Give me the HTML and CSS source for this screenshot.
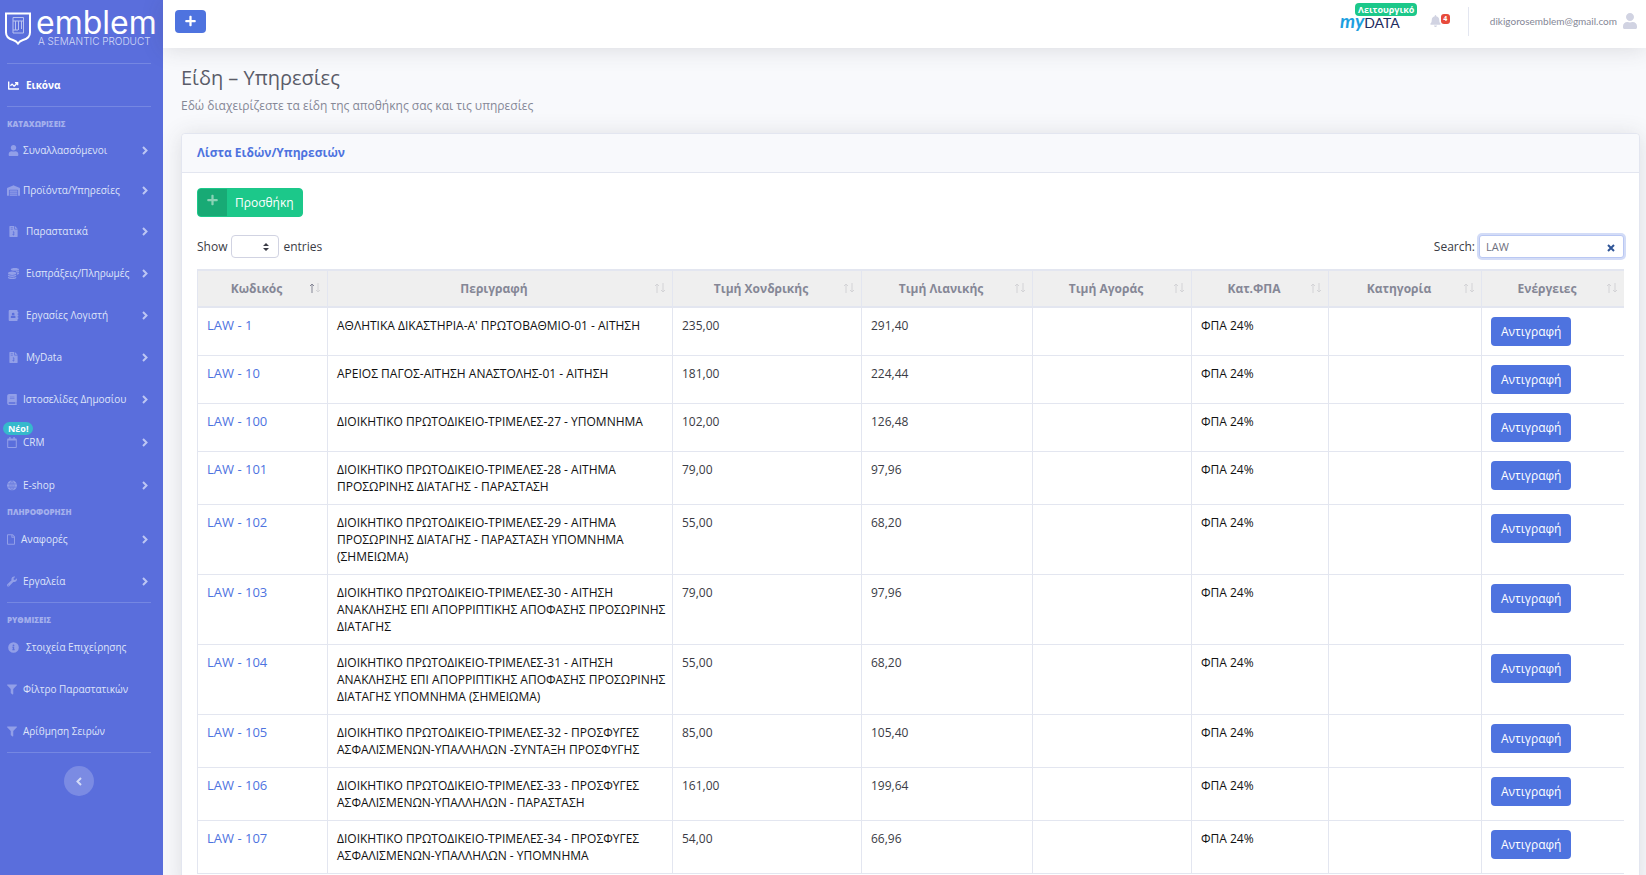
FILE: index.html
```html
<!DOCTYPE html>
<html lang="el">
<head>
	<meta charset="UTF-8">
	<meta name="viewport" content="width=device-width, initial-scale=1">
	<title>Είδη – Υπηρεσίες</title>
	<link rel="stylesheet" href="styles.css">
</head>
<body>
	<!-- icon set -->
	<svg class="sprite" aria-hidden="true">
		<symbol id="i-plus" viewBox="0 0 448 512"><path d="M416 208H272V64c0-17.67-14.33-32-32-32h-32c-17.67 0-32 14.33-32 32v144H32c-17.67 0-32 14.33-32 32v32c0 17.67 14.33 32 32 32h144v144c0 17.67 14.33 32 32 32h32c17.67 0 32-14.33 32-32V304h144c17.67 0 32-14.33 32-32v-32c0-17.67-14.33-32-32-32z"/></symbol>
		<symbol id="i-user" viewBox="0 0 448 512"><path d="M224 256c70.7 0 128-57.3 128-128S294.7 0 224 0 96 57.3 96 128s57.3 128 128 128zm89.6 32h-16.7c-22.2 10.2-46.9 16-72.9 16s-50.6-5.8-72.9-16h-16.7C60.2 288 0 348.2 0 422.4V464c0 26.5 21.5 48 48 48h352c26.5 0 48-21.5 48-48v-41.6c0-74.2-60.2-134.4-134.4-134.4z"/></symbol>
		<symbol id="i-bell" viewBox="0 0 448 512"><path d="M224 512c35.32 0 63.97-28.65 63.97-64H160.03c0 35.35 28.65 64 63.97 64zm215.39-149.71c-19.32-20.76-55.47-51.99-55.47-154.29 0-77.7-54.48-139.9-127.94-155.16V32c0-17.67-14.32-32-31.98-32s-31.98 14.33-31.98 32v20.84C118.56 68.1 64.08 130.3 64.08 208c0 102.3-36.15 133.53-55.47 154.29-6 6.45-8.66 14.16-8.61 21.71.11 16.4 12.98 32 32.1 32h383.8c19.12 0 32-15.6 32.1-32 .05-7.55-2.61-15.27-8.61-21.71z"/></symbol>
		<symbol id="i-chart" viewBox="0 0 512 512"><path d="M496 384H64V80c0-8.84-7.16-16-16-16H16C7.16 64 0 71.16 0 80v336c0 17.67 14.33 32 32 32h464c8.84 0 16-7.16 16-16v-32c0-8.84-7.16-16-16-16zM464 96H345.94c-21.38 0-32.09 25.85-16.97 40.97l32.4 32.4L288 242.75l-73.37-73.37c-12.5-12.5-32.76-12.5-45.25 0l-68.69 68.69c-6.25 6.25-6.25 16.38 0 22.63l22.62 22.62c6.25 6.25 16.38 6.25 22.63 0L192 237.25l73.37 73.37c12.5 12.5 32.76 12.5 45.25 0l96-96 32.4 32.4c15.12 15.12 40.97 4.41 40.97-16.97V112c.01-8.84-7.15-16-15.99-16z"/></symbol>
		<symbol id="i-warehouse" viewBox="0 0 640 512"><path d="M504 352H136c-4 0-8 4-8 8v48c0 4 4 8 8 8h368c4 0 8-4 8-8v-48c0-4-4-8-8-8zm0 96H136c-4 0-8 4-8 8v48c0 4 4 8 8 8h368c4 0 8-4 8-8v-48c0-4-4-8-8-8zm0-192H136c-4 0-8 4-8 8v48c0 4 4 8 8 8h368c4 0 8-4 8-8v-48c0-4-4-8-8-8zm106-139L338 4c-12-5-25-5-37 0L30 117C12 125 0 142 0 161v343c0 4 4 8 8 8h80c4 0 8-4 8-8V256c0-18 15-32 33-32h382c18 0 33 14 33 32v248c0 4 4 8 8 8h80c4 0 8-4 8-8V161c0-19-12-36-30-44z"/></symbol>
		<symbol id="i-invoice" viewBox="0 0 384 512"><path fill-rule="evenodd" d="M24 0h200v136c0 13 11 24 24 24h136v328c0 13-11 24-24 24H24c-13 0-24-11-24-24V24C0 11 11 0 24 0zm232 0l128 128H256zM64 64v32h96V64zm0 64v32h96v-32zm100 112v48h56v-24h-24v-24zm28 64c-40 0-40 56 0 62 20 4 18 18 0 18h-46v32h30v24h32v-26c44-8 44-68-8-76-16-3-14-14 0-14h40v-20z"/></symbol>
		<symbol id="i-coins" viewBox="0 0 512 512"><path d="M0 405v43c0 35 86 64 192 64s192-29 192-64v-43c-41 29-117 43-192 43S41 434 0 405zM320 128c106 0 192-29 192-64S426 0 320 0 128 29 128 64s86 64 192 64zM0 300v52c0 35 86 64 192 64s192-29 192-64v-52c-41 34-117 52-192 52S41 334 0 300zm416 11c57-11 96-32 96-55v-43c-23 17-57 28-96 35zM192 160C86 160 0 196 0 240s86 80 192 80 192-36 192-80-86-80-192-80zm219 56c60-11 101-32 101-56v-43c-36 25-99 39-165 42 30 15 54 34 64 57z"/></symbol>
		<symbol id="i-address" viewBox="0 0 448 512"><path fill-rule="evenodd" d="M48 0h320c26 0 48 22 48 48v48h20c7 0 12 5 12 12v40c0 7-5 12-12 12h-20v64h20c7 0 12 5 12 12v40c0 7-5 12-12 12h-20v64h20c7 0 12 5 12 12v40c0 7-5 12-12 12h-20v48c0 26-22 48-48 48H48c-26 0-48-22-48-48V48C0 22 22 0 48 0zm160 128a64 64 0 1 0 0 128 64 64 0 0 0 0-128zm-45 144c-37 0-67 26-67 58v20c0 10 10 18 22 18h180c12 0 22-8 22-18v-20c0-32-30-58-67-58-28 16-62 16-90 0z"/></symbol>
		<symbol id="i-book" viewBox="0 0 448 512"><path fill-rule="evenodd" d="M448 360V24c0-13-11-24-24-24H96C43 0 0 43 0 96v320c0 53 43 96 96 96h328c13 0 24-11 24-24v-16c0-8-4-14-9-19-4-15-4-59 0-74 5-4 9-11 9-19zM128 128h210v28H128zm0 64h210v28H128zm253 256H96c-42 0-42-64 0-64h285c-2 17-2 47 0 64z"/></symbol>
		<symbol id="i-calendar" viewBox="0 0 448 512"><path fill-rule="evenodd" d="M400 64h-48V12c0-7-5-12-12-12h-40c-7 0-12 5-12 12v52H160V12c0-7-5-12-12-12h-40c-7 0-12 5-12 12v52H48c-26 0-48 22-48 48v352c0 26 22 48 48 48h352c26 0 48-22 48-48V112c0-26-22-48-48-48zm0 394c0 3-3 6-6 6H54c-3 0-6-3-6-6V160h352z"/></symbol>
		<symbol id="i-globe" viewBox="0 0 496 512"><circle cx="248" cy="256" r="248"/><path class="globe-lines" d="M0 176h496M0 336h496M248 0v512M248 8c-140 130-140 366 0 496M248 8c140 130 140 366 0 496"/></symbol>
		<symbol id="i-file" viewBox="0 0 384 512"><path d="M369.9 97.9L286 14C277 5 264.8-.1 252.1-.1H48C21.5 0 0 21.5 0 48v416c0 26.5 21.5 48 48 48h288c26.5 0 48-21.5 48-48V131.9c0-12.7-5.1-25-14.1-34zM332.1 128H256V51.9l76.1 76.1zM48 464V48h160v104c0 13.3 10.7 24 24 24h104v288H48z"/></symbol>
		<symbol id="i-wrench" viewBox="0 0 512 512"><path d="M507.73 109.1c-2.24-9.03-13.54-12.09-20.12-5.51l-74.36 74.36-67.88-11.31-11.31-67.88 74.36-74.36c6.62-6.62 3.43-17.9-5.66-20.16-47.38-11.74-99.55.91-136.58 37.93-39.64 39.64-50.55 97.1-34.05 147.2L18.74 402.76c-24.99 24.99-24.99 65.51 0 90.5 24.99 24.99 65.51 24.99 90.5 0l213.21-213.21c50.12 16.71 107.47 5.68 147.37-34.22 37.07-37.07 49.7-89.32 37.91-136.73zM64 472c-13.25 0-24-10.75-24-24 0-13.26 10.75-24 24-24s24 10.74 24 24c0 13.25-10.75 24-24 24z"/></symbol>
		<symbol id="i-info" viewBox="0 0 512 512"><path fill-rule="evenodd" d="M256 8a248 248 0 1 0 0 496 248 248 0 0 0 0-496zm0 110a42 42 0 1 1 0 84 42 42 0 0 1 0-84zm56 254c0 7-5 12-12 12h-88c-7 0-12-5-12-12v-24c0-7 5-12 12-12h12v-64h-12c-7 0-12-5-12-12v-24c0-7 5-12 12-12h64c7 0 12 5 12 12v100h12c7 0 12 5 12 12z"/></symbol>
		<symbol id="i-filter" viewBox="0 0 512 512"><path d="M487.976 0H24.028C2.71 0-8.047 25.866 7.058 40.971L192 225.941V432c0 7.831 3.821 15.17 10.237 19.662l80 55.98C298.02 518.69 320 507.493 320 487.98V225.941l184.947-184.97C520.021 25.896 509.338 0 487.976 0z"/></symbol>
		<symbol id="i-angle" viewBox="0 0 6 9"><path class="line-bold" d="M1 1l3.500 3.500L1 8"/></symbol>
		<symbol id="i-sort" viewBox="0 0 12 10"><path class="line sort-up" d="M3 10V1M1 3l2-2 2 2"/><path class="line" d="M9 0v9M7 7l2 2 2-2"/></symbol>
	</svg>

	<div class="layout">
		<nav class="sidebar">
			<a class="brand" href="#">
				<svg class="brand-shield" viewBox="0 0 26 33" aria-hidden="true">
					<path class="shield-line" d="M1 1.500h24v19c0 4-3 6.500-7 7.500-2.500.700-4 2-5 3.500-1-1.500-2.500-2.800-5-3.500-4-1-7-3.500-7-7.500z"/>
					<path class="shield-mark" d="M8 5.500h10.500v15.500H8zM8 9h10.500M10.500 9v9M13.500 9v9M16.500 9v8M8 18h5"/>
				</svg>
				<span class="brand-text">
					<span class="brand-name">emblem</span>
					<span class="brand-tag">A SEMANTIC PRODUCT</span>
				</span>
			</a>
			<hr class="divider">
			<a class="nav-link active" href="#"><svg class="icon fw"><use href="#i-chart"/></svg>Εικόνα</a>
			<hr class="divider">

			<div class="nav-heading">ΚΑΤΑΧΩΡΙΣΕΙΣ</div>
			<a class="nav-link compact" href="#"><svg class="icon fw"><use href="#i-user"/></svg>Συναλλασσόμενοι<svg class="angle"><use href="#i-angle"/></svg></a>
			<a class="nav-link compact" href="#"><svg class="icon fw"><use href="#i-warehouse"/></svg>Προϊόντα/Υπηρεσίες<svg class="angle"><use href="#i-angle"/></svg></a>
			<a class="nav-link" href="#"><svg class="icon fw"><use href="#i-invoice"/></svg>Παραστατικά<svg class="angle"><use href="#i-angle"/></svg></a>
			<a class="nav-link" href="#"><svg class="icon fw"><use href="#i-coins"/></svg>Εισπράξεις/Πληρωμές<svg class="angle"><use href="#i-angle"/></svg></a>
			<a class="nav-link" href="#"><svg class="icon fw"><use href="#i-address"/></svg>Εργασίες Λογιστή<svg class="angle"><use href="#i-angle"/></svg></a>
			<a class="nav-link" href="#"><svg class="icon fw"><use href="#i-invoice"/></svg>MyData<svg class="angle"><use href="#i-angle"/></svg></a>
			<a class="nav-link" href="#"><svg class="icon"><use href="#i-book"/></svg>Ιστοσελίδες Δημοσίου<svg class="angle"><use href="#i-angle"/></svg></a>
			<a class="nav-link has-badge" href="#"><span class="badge-new">Νέο!</span><svg class="icon"><use href="#i-calendar"/></svg>CRM<svg class="angle"><use href="#i-angle"/></svg></a>
			<a class="nav-link" href="#"><svg class="icon"><use href="#i-globe"/></svg>E-shop<svg class="angle"><use href="#i-angle"/></svg></a>

			<div class="nav-heading">ΠΛΗΡΟΦΟΡΗΣΗ</div>
			<a class="nav-link" href="#"><svg class="icon narrow"><use href="#i-file"/></svg>Αναφορές<svg class="angle"><use href="#i-angle"/></svg></a>
			<a class="nav-link" href="#"><svg class="icon"><use href="#i-wrench"/></svg>Εργαλεία<svg class="angle"><use href="#i-angle"/></svg></a>
			<hr class="divider">

			<div class="nav-heading">ΡΥΘΜΙΣΕΙΣ</div>
			<a class="nav-link" href="#"><svg class="icon fw"><use href="#i-info"/></svg>Στοιχεία Επιχείρησης</a>
			<a class="nav-link" href="#"><svg class="icon"><use href="#i-filter"/></svg>Φίλτρο Παραστατικών</a>
			<a class="nav-link" href="#"><svg class="icon"><use href="#i-filter"/></svg>Αρίθμηση Σειρών</a>
			<hr class="divider">
			<button class="collapse" type="button" aria-label="Σύμπτυξη μενού"><svg class="angle back"><use href="#i-angle"/></svg></button>
		</nav>

		<div class="main">
			<header class="topbar">
				<button class="btn-new" type="button" aria-label="Νέο"><svg><use href="#i-plus"/></svg></button>
				<a class="mydata" href="#"><span class="mydata-my">my</span><span class="mydata-data">DATA</span><span class="mydata-status">Λειτουργικό</span></a>
				<a class="alerts" href="#" aria-label="Ειδοποιήσεις"><svg><use href="#i-bell"/></svg><span class="alerts-count">4</span></a>
				<a class="account" href="#">dikigorosemblem@gmail.com<svg><use href="#i-user"/></svg></a>
			</header>

			<main class="content">
				<h1>Είδη – Υπηρεσίες</h1>
				<p class="lead">Εδώ διαχειρίζεστε τα είδη της αποθήκης σας και τις υπηρεσίες</p>

				<section class="card">
					<h2 class="card-header">Λίστα Ειδών/Υπηρεσιών</h2>
					<div class="card-body">
						<button class="btn-add" type="button"><span class="btn-add-icon"><svg><use href="#i-plus"/></svg></span><span class="btn-add-text">Προσθήκη</span></button>

						<div class="table-tools">
							<label class="length">Show
								<span class="select-wrap">
									<select><option></option><option>10</option><option>25</option></select>
									<svg viewBox="0 0 6 8"><path d="M0 3l3-3 3 3zM0 5h6L3 8z"/></svg>
								</span>
								entries</label>
							<div class="filter">
								<label for="search">Search:</label>
								<span class="search-wrap">
									<input id="search" type="text" value="LAW" autofocus>
									<button class="clear" type="button" aria-label="Clear"><svg viewBox="0 0 8 8"><path d="M1 1l6 6M7 1L1 7"/></svg></button>
								</span>
							</div>
						</div>

						<table>
							<colgroup>
								<col class="c-code"><col class="c-desc"><col class="c-whole"><col class="c-retail"><col class="c-buy"><col class="c-vat"><col class="c-cat"><col class="c-act">
							</colgroup>
							<thead>
								<tr>
									<th class="sorted">Κωδικός<svg class="sort"><use href="#i-sort"/></svg></th>
									<th>Περιγραφή<svg class="sort"><use href="#i-sort"/></svg></th>
									<th>Τιμή Χονδρικής<svg class="sort"><use href="#i-sort"/></svg></th>
									<th>Τιμή Λιανικής<svg class="sort"><use href="#i-sort"/></svg></th>
									<th>Τιμή Αγοράς<svg class="sort"><use href="#i-sort"/></svg></th>
									<th>Κατ.ΦΠΑ<svg class="sort"><use href="#i-sort"/></svg></th>
									<th>Κατηγορία<svg class="sort"><use href="#i-sort"/></svg></th>
									<th>Ενέργειες<svg class="sort"><use href="#i-sort"/></svg></th>
								</tr>
							</thead>
							<tbody>
								<tr>
									<td class="code"><a href="#">LAW - 1</a></td>
									<td class="desc">ΑΘΛΗΤΙΚΑ ΔΙΚΑΣΤΗΡΙΑ-Α' ΠΡΩΤΟΒΑΘΜΙΟ-01 - ΑΙΤΗΣΗ</td>
									<td>235,00</td><td>291,40</td><td></td><td class="vat">ΦΠΑ 24%</td><td></td>
									<td><button class="btn-copy" type="button">Αντιγραφή</button></td>
								</tr>
								<tr>
									<td class="code"><a href="#">LAW - 10</a></td>
									<td class="desc">ΑΡΕΙΟΣ ΠΑΓΟΣ-ΑΙΤΗΣΗ ΑΝΑΣΤΟΛΗΣ-01 - ΑΙΤΗΣΗ</td>
									<td>181,00</td><td>224,44</td><td></td><td class="vat">ΦΠΑ 24%</td><td></td>
									<td><button class="btn-copy" type="button">Αντιγραφή</button></td>
								</tr>
								<tr>
									<td class="code"><a href="#">LAW - 100</a></td>
									<td class="desc">ΔΙΟΙΚΗΤΙΚΟ ΠΡΩΤΟΔΙΚΕΙΟ-ΤΡΙΜΕΛΕΣ-27 - ΥΠΟΜΝΗΜΑ</td>
									<td>102,00</td><td>126,48</td><td></td><td class="vat">ΦΠΑ 24%</td><td></td>
									<td><button class="btn-copy" type="button">Αντιγραφή</button></td>
								</tr>
								<tr>
									<td class="code"><a href="#">LAW - 101</a></td>
									<td class="desc">ΔΙΟΙΚΗΤΙΚΟ ΠΡΩΤΟΔΙΚΕΙΟ-ΤΡΙΜΕΛΕΣ-28 - ΑΙΤΗΜΑ ΠΡΟΣΩΡΙΝΗΣ ΔΙΑΤΑΓΗΣ - ΠΑΡΑΣΤΑΣΗ</td>
									<td>79,00</td><td>97,96</td><td></td><td class="vat">ΦΠΑ 24%</td><td></td>
									<td><button class="btn-copy" type="button">Αντιγραφή</button></td>
								</tr>
								<tr>
									<td class="code"><a href="#">LAW - 102</a></td>
									<td class="desc">ΔΙΟΙΚΗΤΙΚΟ ΠΡΩΤΟΔΙΚΕΙΟ-ΤΡΙΜΕΛΕΣ-29 - ΑΙΤΗΜΑ ΠΡΟΣΩΡΙΝΗΣ ΔΙΑΤΑΓΗΣ - ΠΑΡΑΣΤΑΣΗ ΥΠΟΜΝΗΜΑ (ΣΗΜΕΙΩΜΑ)</td>
									<td>55,00</td><td>68,20</td><td></td><td class="vat">ΦΠΑ 24%</td><td></td>
									<td><button class="btn-copy" type="button">Αντιγραφή</button></td>
								</tr>
								<tr>
									<td class="code"><a href="#">LAW - 103</a></td>
									<td class="desc">ΔΙΟΙΚΗΤΙΚΟ ΠΡΩΤΟΔΙΚΕΙΟ-ΤΡΙΜΕΛΕΣ-30 - ΑΙΤΗΣΗ ΑΝΑΚΛΗΣΗΣ ΕΠΙ ΑΠΟΡΡΙΠΤΙΚΗΣ ΑΠΟΦΑΣΗΣ ΠΡΟΣΩΡΙΝΗΣ ΔΙΑΤΑΓΗΣ</td>
									<td>79,00</td><td>97,96</td><td></td><td class="vat">ΦΠΑ 24%</td><td></td>
									<td><button class="btn-copy" type="button">Αντιγραφή</button></td>
								</tr>
								<tr>
									<td class="code"><a href="#">LAW - 104</a></td>
									<td class="desc">ΔΙΟΙΚΗΤΙΚΟ ΠΡΩΤΟΔΙΚΕΙΟ-ΤΡΙΜΕΛΕΣ-31 - ΑΙΤΗΣΗ ΑΝΑΚΛΗΣΗΣ ΕΠΙ ΑΠΟΡΡΙΠΤΙΚΗΣ ΑΠΟΦΑΣΗΣ ΠΡΟΣΩΡΙΝΗΣ ΔΙΑΤΑΓΗΣ ΥΠΟΜΝΗΜΑ (ΣΗΜΕΙΩΜΑ)</td>
									<td>55,00</td><td>68,20</td><td></td><td class="vat">ΦΠΑ 24%</td><td></td>
									<td><button class="btn-copy" type="button">Αντιγραφή</button></td>
								</tr>
								<tr>
									<td class="code"><a href="#">LAW - 105</a></td>
									<td class="desc">ΔΙΟΙΚΗΤΙΚΟ ΠΡΩΤΟΔΙΚΕΙΟ-ΤΡΙΜΕΛΕΣ-32 - ΠΡΟΣΦΥΓΕΣ ΑΣΦΑΛΙΣΜΕΝΩΝ-ΥΠΑΛΛΗΛΩΝ -ΣΥΝΤΑΞΗ ΠΡΟΣΦΥΓΗΣ</td>
									<td>85,00</td><td>105,40</td><td></td><td class="vat">ΦΠΑ 24%</td><td></td>
									<td><button class="btn-copy" type="button">Αντιγραφή</button></td>
								</tr>
								<tr>
									<td class="code"><a href="#">LAW - 106</a></td>
									<td class="desc">ΔΙΟΙΚΗΤΙΚΟ ΠΡΩΤΟΔΙΚΕΙΟ-ΤΡΙΜΕΛΕΣ-33 - ΠΡΟΣΦΥΓΕΣ ΑΣΦΑΛΙΣΜΕΝΩΝ-ΥΠΑΛΛΗΛΩΝ - ΠΑΡΑΣΤΑΣΗ</td>
									<td>161,00</td><td>199,64</td><td></td><td class="vat">ΦΠΑ 24%</td><td></td>
									<td><button class="btn-copy" type="button">Αντιγραφή</button></td>
								</tr>
								<tr>
									<td class="code"><a href="#">LAW - 107</a></td>
									<td class="desc">ΔΙΟΙΚΗΤΙΚΟ ΠΡΩΤΟΔΙΚΕΙΟ-ΤΡΙΜΕΛΕΣ-34 - ΠΡΟΣΦΥΓΕΣ ΑΣΦΑΛΙΣΜΕΝΩΝ-ΥΠΑΛΛΗΛΩΝ - ΥΠΟΜΝΗΜΑ</td>
									<td>54,00</td><td>66,96</td><td></td><td class="vat">ΦΠΑ 24%</td><td></td>
									<td><button class="btn-copy" type="button">Αντιγραφή</button></td>
								</tr>
							</tbody>
						</table>
					</div>
				</section>
			</main>
		</div>
	</div>
</body>
</html>
```
FILE: styles.css
```css
* {
	box-sizing: border-box;
}

body {
	margin: 0;
	font-family: "Open Sans", "Noto Sans", sans-serif;
	font-size: 12px;
	line-height: 17px;
	color: #3a3b45;
	background-color: #f8f9fc;
}

a {
	color: #4e73df;
	text-decoration: none;
}

button, input, select {
	font: inherit;
}

button {
	border: none;
	padding: 0;
	cursor: pointer;
}

svg {
	display: block;
	fill: currentColor;
}

.sprite {
	position: absolute;
	width: 0;
	height: 0;
}

.line {
	fill: none;
	stroke: currentColor;
	stroke-width: 1;
}

.line-bold {
	fill: none;
	stroke: currentColor;
	stroke-width: 2;
}

.globe-lines {
	fill: none;
	stroke: #5a6edc;
	stroke-width: 26;
}

.layout {
	display: flex;
	height: 100vh;
	overflow: hidden;
}

/* sidebar */
.sidebar {
	flex: 0 0 163px;
	min-width: 0;
	padding: 0 12px 0 7px;
	background-color: #5a6edc;
	color: #fff;
}

.brand {
	display: flex;
	gap: 5px;
	height: 63px;
	padding-top: 12px;
	margin-left: -2px;
	color: #fff;
}

.brand-shield {
	flex: none;
	width: 26px;
	height: 33px;
}

.shield-line {
	fill: none;
	stroke: #fff;
	stroke-width: 2;
}

.shield-mark {
	fill: none;
	stroke: #b8c2f0;
	stroke-width: 1;
}

.brand-text {
	display: flex;
	flex-direction: column;
	font-family: Inter, sans-serif;
	white-space: nowrap;
}

.brand-name {
	font-size: 32px;
	line-height: 22px;
}

.brand-tag {
	padding-left: 2px;
	font-size: 10px;
	font-weight: 300;
	line-height: 14px;
	color: #d5dbf7;
}

.divider {
	height: 1px;
	margin: 0;
	border: none;
	background-color: #7587e2;
}

.divider + .nav-heading {
	margin-top: 11px;
}

.nav-heading {
	font-size: 8px;
	font-weight: 800;
	line-height: 12px;
	color: #a4b0ec;
}

.nav-link {
	position: relative;
	display: flex;
	align-items: center;
	gap: 6px;
	height: 42px;
	font-size: 10px;
	white-space: nowrap;
	color: #dfe4f9;
}

.nav-link.active {
	font-weight: 700;
	color: #fff;
}

.nav-link.active .icon {
	color: #fff;
}

.nav-link.compact {
	height: 40px;
	gap: 3px;
}

.nav-link.has-badge {
	height: 44px;
}

.icon {
	flex: none;
	width: 10px;
	height: 11px;
	color: #929fe8;
}

.icon.fw {
	width: 13px;
}

.icon.narrow {
	width: 8px;
}

.angle {
	flex: none;
	width: 6px;
	height: 9px;
	margin: 0 3px 0 auto;
	color: #bdc6f3;
}

.badge-new {
	position: absolute;
	top: 2px;
	left: -4px;
	padding: 0 5px;
	border-radius: 7px;
	background-color: #36b9cc;
	font-size: 9px;
	font-weight: 700;
	line-height: 13px;
	color: #fff;
}

.collapse {
	display: flex;
	align-items: center;
	justify-content: center;
	width: 30px;
	height: 30px;
	margin: 13px auto 0;
	border-radius: 50%;
	background-color: #7b8be3;
}

.angle.back {
	margin: 0;
	transform: rotate(180deg);
	color: #d3daf7;
}

/* top bar */
.main {
	flex: 1;
	min-width: 0;
}

.topbar {
	position: relative;
	display: flex;
	align-items: center;
	height: 48px;
	padding: 0 9px 6px 12px;
	background-color: #fff;
	box-shadow: 0 2px 22px rgba(58, 59, 69, .15);
}

.btn-new {
	display: flex;
	align-items: center;
	justify-content: center;
	width: 31px;
	height: 23px;
	margin-right: auto;
	border-radius: 4px;
	background-color: #4e73df;
	color: #fff;
}

.btn-new svg {
	width: 11px;
	height: 12px;
}

.mydata {
	position: relative;
	display: flex;
	align-items: baseline;
	margin-right: 30px;
	font-family: Lato, sans-serif;
	color: #1d2b5e;
}

.mydata-my {
	font-size: 19px;
	font-style: italic;
	font-weight: 700;
	color: #1d9fe0;
}

.mydata-data {
	font-size: 14px;
}

.mydata-status {
	position: absolute;
	top: -9px;
	left: 15px;
	padding: 0 3px;
	border-radius: 4px;
	background-color: #1cc88a;
	font-family: "Open Sans", sans-serif;
	font-size: 9px;
	font-weight: 700;
	line-height: 13px;
	color: #fff;
}

.alerts {
	display: flex;
	padding-right: 18px;
	color: #d1d3e2;
}

.alerts svg {
	width: 11px;
	height: 12px;
}

.alerts-count {
	width: 9px;
	height: 10px;
	margin-top: -1px;
	border-radius: 3px;
	background-color: #e74a3b;
	font-size: 7px;
	font-weight: 700;
	line-height: 10px;
	text-align: center;
	color: #fff;
}

.account {
	display: flex;
	align-items: center;
	gap: 6px;
	height: 29px;
	padding-left: 21px;
	border-left: 1px solid #e3e6f0;
	font-family: Lato, sans-serif;
	font-size: 10px;
	color: #858796;
}

.account svg {
	width: 14px;
	height: 16px;
	color: #d1d3e2;
}

/* page */
.content {
	padding: 17px 6px 0 18px;
}

h1 {
	margin: 0;
	font-size: 20px;
	font-weight: 400;
	line-height: 26px;
	color: #5a5c69;
}

.lead {
	margin: 6px 0 19px;
	color: #858796;
}

.card {
	border: 1px solid #e3e6f0;
	border-radius: 4px;
	background-color: #fff;
	box-shadow: 0 2px 22px rgba(58, 59, 69, .15);
}

.card-header {
	margin: 0;
	padding: 10px 15px 11px;
	border-bottom: 1px solid #e3e6f0;
	border-radius: 4px 4px 0 0;
	background-color: #f8f9fc;
	font-size: 12px;
	font-weight: 700;
	color: #4e73df;
}

.card-body {
	padding: 15px;
}

.btn-add {
	display: flex;
	height: 29px;
	border: 1px solid #1cc88a;
	border-radius: 4px;
	overflow: hidden;
	background-color: #1cc88a;
	color: #fff;
}

.btn-add-icon {
	width: 29px;
	height: 27px;
	padding: 5px 9px;
	background-color: #18aa75;
	color: #8ad3b6;
}

.btn-add-icon svg {
	width: 11px;
	height: 12px;
}

.btn-add-text {
	padding: 0 8px;
	line-height: 27px;
}

.table-tools {
	display: flex;
	align-items: center;
	justify-content: space-between;
	margin: 17px 0 10px;
	height: 25px;
}

.length, .filter {
	display: flex;
	align-items: center;
	gap: 4px;
}

.select-wrap, .search-wrap {
	position: relative;
}

.select-wrap select {
	display: block;
	appearance: none;
	width: 48px;
	height: 23px;
	border: 1px solid #d1d3e2;
	border-radius: 4px;
	background-color: #fff;
}

.select-wrap svg {
	position: absolute;
	top: 8px;
	right: 10px;
	width: 6px;
	height: 8px;
	pointer-events: none;
}

.search-wrap input {
	display: block;
	width: 145px;
	height: 23px;
	padding: 0 6px;
	border: 1px solid #bac8f3;
	border-radius: 3px;
	outline: none;
	box-shadow: 0 0 0 2px #d3dcf7;
	font-size: 11px;
	color: #6e707e;
}

.clear {
	position: absolute;
	top: 9px;
	right: 9px;
	background: none;
}

.clear svg {
	width: 8px;
	height: 8px;
	stroke: #2f5597;
	stroke-width: 2;
}

/* items table */
table {
	width: 100%;
	table-layout: fixed;
	border-collapse: separate;
	border-spacing: 0;
}

.c-code {
	width: 130px;
}

.c-desc {
	width: 345px;
}

.c-whole {
	width: 189px;
}

.c-retail {
	width: 171px;
}

.c-buy {
	width: 159px;
}

.c-vat {
	width: 137px;
}

.c-cat {
	width: 153px;
}

.c-act {
	width: 143px;
}

th {
	position: relative;
	padding: 9px 21px 9px 9px;
	border: solid #e3e6f0;
	border-width: 2px 0 2px 1px;
	background-color: #efefef;
	font-weight: 700;
	color: #858796;
}

td {
	padding: 9px;
	border: solid #e3e6f0;
	border-width: 0 0 1px 1px;
	vertical-align: top;
}

.code {
	font-size: 13px;
}

.desc, .vat {
	color: #111;
}

.desc {
	padding-right: 3px;
}

.sort {
	position: absolute;
	top: 12px;
	right: 6px;
	width: 12px;
	height: 10px;
	color: #d3d3d6;
}

.sort-up {
	stroke: var(--sort-up, currentColor);
}

.sorted {
	--sort-up: #858796;
}

.btn-copy {
	display: block;
	height: 29px;
	padding: 0 10px;
	border-radius: 4px;
	background-color: #4e73df;
	color: #fff;
}
```
